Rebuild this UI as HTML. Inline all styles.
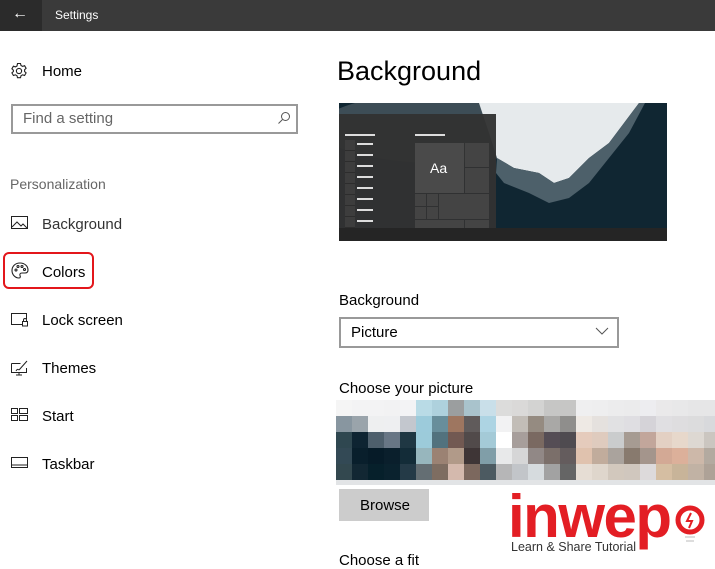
<!DOCTYPE html>
<html><head><meta charset="utf-8"><style>
*{margin:0;padding:0;box-sizing:border-box}
body{width:715px;height:560px;overflow:hidden;background:#fff;font-family:"Segoe UI","Liberation Sans",sans-serif;color:#000;position:relative}
.a{position:absolute}
.t{font-size:15px;white-space:nowrap}
.m{display:grid;grid-template-columns:repeat(24,16px);grid-auto-rows:16px;position:absolute;left:336px;top:400px}
.m div{width:16px;height:16px}
</style></head><body>
<div class="a" style="left:0;top:0;width:715px;height:31px;background:#3a3a3a"></div>
<div class="a" style="left:0;top:0;width:42px;height:31px;background:#2b2b2b"></div>
<div class="a" style="left:12px;top:5px;color:#fff;font-size:16px">&#8592;</div>
<div class="a" style="left:55px;top:8px;color:#fff;font-size:12px">Settings</div>

<svg class="a" style="left:10px;top:62px" width="18" height="18" viewBox="0 0 18 18" fill="none" stroke="#222" stroke-width="1.1"><circle cx="9" cy="9" r="2.6"/><path d="M7.5 1.5h3l.5 2 1.6.9 2-.7 1.5 2.6-1.5 1.4v1.8l1.5 1.4-1.5 2.6-2-.7-1.6.9-.5 2h-3l-.5-2-1.6-.9-2 .7-1.5-2.6 1.5-1.4V8.2L1.9 6.8l1.5-2.6 2 .7 1.6-.9z"/></svg>
<div class="a t" style="left:42px;top:63px">Home</div>
<div class="a" style="left:11px;top:104px;width:287px;height:30px;border:2px solid #999"></div>
<div class="a t" style="left:23px;top:110px;color:#666">Find a setting</div>
<svg class="a" style="left:277px;top:111px" width="14" height="14" viewBox="0 0 14 14" fill="none" stroke="#555" stroke-width="1"><circle cx="8.5" cy="5.5" r="4"/><path d="M5.5 8.5L1.5 12.5"/></svg>
<div class="a" style="left:10px;top:176px;font-size:14px;color:#666">Personalization</div>

<svg class="a" style="left:11px;top:216px" width="18" height="14" viewBox="0 0 18 14" fill="none" stroke="#222" stroke-width="1"><rect x="0.5" y="0.5" width="16" height="12"/><path d="M1 11l5-5 4 4 2-2 4 4"/></svg>
<div class="a t" style="left:42px;top:216px;color:#333">Background</div>

<div class="a" style="left:3px;top:252px;width:91px;height:37px;border:2px solid #e3161b;border-radius:6px"></div>
<svg class="a" style="left:11px;top:262px" width="18" height="17" viewBox="0 0 18 17" fill="none" stroke="#222" stroke-width="1.1"><path d="M9 1C4 1 1 4.5 1 8.5S4 16 8 16c1.5 0 1.5-1.5 1-2.5S9 11 11 11h3c2 0 3-1 3-3C17 4 13.5 1 9 1z"/><circle cx="5" cy="8" r="1"/><circle cx="7" cy="4.5" r="1"/><circle cx="11" cy="4.5" r="1"/><circle cx="13.5" cy="7.5" r="1"/></svg>
<div class="a t" style="left:42px;top:264px">Colors</div>

<svg class="a" style="left:11px;top:313px" width="18" height="14" viewBox="0 0 18 14" fill="none" stroke="#222" stroke-width="1"><path d="M12 11.5H.5V.5h15V6"/><rect x="11.5" y="8.5" width="5" height="4.5"/><path d="M12.5 8.5V7a1.5 1.5 0 013 0v1.5"/></svg>
<div class="a t" style="left:42px;top:312px">Lock screen</div>

<svg class="a" style="left:11px;top:360px" width="18" height="16" viewBox="0 0 18 16" fill="none" stroke="#222" stroke-width="1"><path d="M.5 3.5h9M.5 3.5v9h15V8M5 15h6M8 12.5V15"/><path d="M8 10l8-9M5 11c1-2 2-2 3-1"/></svg>
<div class="a t" style="left:42px;top:360px">Themes</div>

<svg class="a" style="left:11px;top:408px" width="18" height="14" viewBox="0 0 18 14" fill="none" stroke="#222" stroke-width="1"><rect x=".5" y=".5" width="6" height="5"/><rect x="8.5" y=".5" width="8" height="5"/><rect x=".5" y="7.5" width="6" height="5"/><rect x="8.5" y="7.5" width="8" height="5"/></svg>
<div class="a t" style="left:42px;top:408px">Start</div>

<svg class="a" style="left:11px;top:457px" width="18" height="12" viewBox="0 0 18 12" fill="none" stroke="#222" stroke-width="1"><rect x=".5" y=".5" width="16" height="10"/><path d="M1 8h15"/></svg>
<div class="a t" style="left:42px;top:456px">Taskbar</div>

<div class="a" style="left:337px;top:56px;font-size:27px;color:#000">Background</div>

<!-- preview -->
<div class="a" style="left:339px;top:103px;width:328px;height:138px;overflow:hidden;background:#102632">
 <div class="a" style="left:-20px;top:-10px;width:240px;height:70px;background:#3d4d56;border-radius:50%"></div>
 <svg class="a" style="left:0;top:0" width="328" height="138" viewBox="0 0 328 138"><path d="M140 0H300L285 20 270 40 250 55 230 75 215 80 200 70 175 65 158 55 150 30z" fill="#e6eaec"/><path d="M158 55 175 65 200 70 215 80 230 75 250 55 270 40 285 20 300 0h6L290 30 270 55 250 80 230 95 210 100 190 90 165 80 157 70z" fill="#4d606a"/></svg>
 <div class="a" style="left:0;top:11px;width:157px;height:114px;background:rgba(50,50,50,.96)"></div>
 <div class="a" style="left:6px;top:31px;width:30px;height:2px;background:#ddd"></div>
 <div class="a" style="left:76px;top:31px;width:30px;height:2px;background:#ddd"></div>
 <div class="a" style="left:6px;top:37px;width:10px;height:88px;background:repeating-linear-gradient(#3d3d3d 0 10px,#2d2d2d 10px 11px)"></div>
 <div class="a" style="left:18px;top:40px;width:16px;height:80px;background:repeating-linear-gradient(#ddd 0 2px,transparent 2px 11px)"></div>
 <div class="a" style="left:76px;top:40px;width:49px;height:50px;background:#4a4a4a"></div>
 <div class="a" style="left:91px;top:57px;color:#fff;font-size:14px">Aa</div>
 <div class="a" style="left:126px;top:40px;width:24px;height:24px;background:#444"></div>
 <div class="a" style="left:126px;top:65px;width:24px;height:25px;background:#444"></div>
 <div class="a" style="left:76px;top:91px;width:11px;height:12px;background:#444"></div>
 <div class="a" style="left:88px;top:91px;width:11px;height:12px;background:#444"></div>
 <div class="a" style="left:76px;top:104px;width:11px;height:12px;background:#444"></div>
 <div class="a" style="left:88px;top:104px;width:11px;height:12px;background:#444"></div>
 <div class="a" style="left:100px;top:91px;width:50px;height:25px;background:#444"></div>
 <div class="a" style="left:76px;top:117px;width:49px;height:8px;background:#444"></div>
 <div class="a" style="left:126px;top:117px;width:24px;height:8px;background:#444"></div>
 <div class="a" style="left:0;top:125px;width:328px;height:13px;background:#252525"></div>
</div>

<div class="a t" style="left:339px;top:292px">Background</div>
<div class="a" style="left:339px;top:317px;width:280px;height:31px;border:2px solid #999"></div>
<div class="a t" style="left:351px;top:324px">Picture</div>
<svg class="a" style="left:595px;top:327px" width="14" height="8" viewBox="0 0 14 8" fill="none" stroke="#555" stroke-width="1"><path d="M1 1l6 6 6-6"/></svg>
<div class="a t" style="left:339px;top:380px">Choose your picture</div>

<div class="m">
<div style="background:#f5f5f5"></div><div style="background:#f3f3f4"></div><div style="background:#f3f3f4"></div><div style="background:#f2f2f3"></div><div style="background:#f3f3f5"></div><div style="background:#b9dbe6"></div><div style="background:#aed1dd"></div><div style="background:#9b9e9f"></div><div style="background:#a9c3cc"></div><div style="background:#c9dfe9"></div><div style="background:#dcdcdb"></div><div style="background:#dad9d8"></div><div style="background:#d3d3d2"></div><div style="background:#c6c6c5"></div><div style="background:#c6c6c5"></div><div style="background:#efeff0"></div><div style="background:#eeeeef"></div><div style="background:#ececed"></div><div style="background:#ebebec"></div><div style="background:#ededf0"></div><div style="background:#eae9ea"></div><div style="background:#e8e8e9"></div><div style="background:#e6e6e7"></div><div style="background:#e6e6e7"></div>
<div style="background:#8896a0"></div><div style="background:#9aa4ab"></div><div style="background:#eeeff0"></div><div style="background:#eeeff1"></div><div style="background:#c3c7ce"></div><div style="background:#9ccbdb"></div><div style="background:#688e9b"></div><div style="background:#9e7660"></div><div style="background:#605b5b"></div><div style="background:#add4e3"></div><div style="background:#f2f2f3"></div><div style="background:#c2bdb7"></div><div style="background:#958b81"></div><div style="background:#a9a8a6"></div><div style="background:#8f8e8c"></div><div style="background:#eee9e4"></div><div style="background:#e5e1de"></div><div style="background:#e1e1e3"></div><div style="background:#dfdee2"></div><div style="background:#d5d3d8"></div><div style="background:#e0dfe2"></div><div style="background:#dedddf"></div><div style="background:#dcdcdd"></div><div style="background:#d8d9dc"></div>
<div style="background:#2f4750"></div><div style="background:#0e2432"></div><div style="background:#4e5f6c"></div><div style="background:#687685"></div><div style="background:#1f3743"></div><div style="background:#9ccbda"></div><div style="background:#52727e"></div><div style="background:#725952"></div><div style="background:#514a4a"></div><div style="background:#a4cad7"></div><div style="background:#ffffff"></div><div style="background:#a79e9b"></div><div style="background:#7a6961"></div><div style="background:#554d55"></div><div style="background:#4f4b50"></div><div style="background:#e5cbbc"></div><div style="background:#dfcbbe"></div><div style="background:#cacccd"></div><div style="background:#a69b92"></div><div style="background:#c2a69b"></div><div style="background:#e3d0c3"></div><div style="background:#e7d8cb"></div><div style="background:#ddd8d2"></div><div style="background:#cbc6c0"></div>
<div style="background:#334955"></div><div style="background:#091f2c"></div><div style="background:#061b28"></div><div style="background:#0a1f2c"></div><div style="background:#132c38"></div><div style="background:#97b6bd"></div><div style="background:#9b8273"></div><div style="background:#b19a89"></div><div style="background:#3e3536"></div><div style="background:#809ea8"></div><div style="background:#e8e9ea"></div><div style="background:#d6d6d7"></div><div style="background:#918886"></div><div style="background:#7b6f6a"></div><div style="background:#645c5d"></div><div style="background:#e0c2ae"></div><div style="background:#c1ac9c"></div><div style="background:#aaa39d"></div><div style="background:#887a6e"></div><div style="background:#a4958c"></div><div style="background:#d3a995"></div><div style="background:#dcb09a"></div><div style="background:#cdb8a9"></div><div style="background:#b3aaa0"></div>
<div style="background:#33484f"></div><div style="background:#122733"></div><div style="background:#06202b"></div><div style="background:#0a222e"></div><div style="background:#243a47"></div><div style="background:#646e73"></div><div style="background:#7e6d61"></div><div style="background:#d4b9ad"></div><div style="background:#7c685e"></div><div style="background:#4c5a61"></div><div style="background:#b6b6b7"></div><div style="background:#c2c5c9"></div><div style="background:#d6dbde"></div><div style="background:#a2a2a2"></div><div style="background:#656565"></div><div style="background:#e6ddd4"></div><div style="background:#dfd6cc"></div><div style="background:#d2c8bd"></div><div style="background:#d0c7be"></div><div style="background:#dddadb"></div><div style="background:#d5bea2"></div><div style="background:#c8b499"></div><div style="background:#c1b2a4"></div><div style="background:#aea297"></div>
</div>
<div class="a" style="left:336px;top:480px;width:379px;height:5px;background:#e2e4e6"></div>

<div class="a" style="left:339px;top:489px;width:90px;height:32px;background:#ccc"></div>
<div class="a t" style="left:360px;top:497px">Browse</div>
<div class="a t" style="left:339px;top:552px">Choose a fit</div>

<!-- logo -->
<div class="a" style="left:508px;top:487px;font-family:'Liberation Sans',sans-serif;font-weight:bold;font-size:60px;color:#e31e24;letter-spacing:-1.5px;line-height:1">inwep</div>
<svg class="a" style="left:674px;top:504px" width="32" height="48" viewBox="0 0 32 48" fill="none" stroke="#e31e24"><circle cx="16" cy="16" r="12" stroke-width="5"/><path d="M17 9l-4 8h5l-3 7" stroke-width="2"/><path d="M11 33h10M12 37h8" stroke="#ddd" stroke-width="2"/></svg>
<div class="a" style="left:511px;top:540px;font-family:'Liberation Sans',sans-serif;font-size:12.5px;color:#333;white-space:nowrap">Learn &amp; Share Tutorial</div>
</body></html>
